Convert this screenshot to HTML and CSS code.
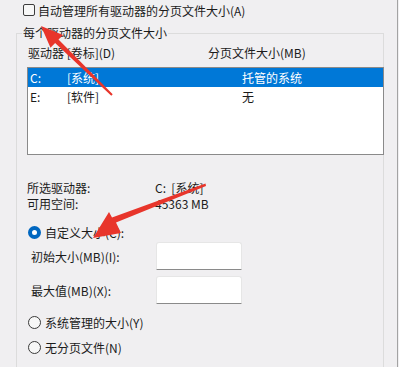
FILE: index.html
```html
<!DOCTYPE html>
<html lang="zh-CN">
<head>
  <meta charset="UTF-8">
  <title>虚拟内存</title>
  <link rel="stylesheet" href="styles.css">
</head>
<body>
  <div class="page">
    <div class="auto">
      <span class="check"></span>
      <span>自动管理所有驱动器的分页文件大小(A)</span>
    </div>

    <div class="group">
      <div class="group-title">每个驱动器的分页文件大小</div>

      <div class="list-head">
        <span class="col-drive">驱动器 [卷标](D)</span>
        <span>分页文件大小(MB)</span>
      </div>

      <div class="list">
        <div class="row selected">
          <span>C:</span><span>[系统]</span><span>托管的系统</span>
        </div>
        <div class="row">
          <span>E:</span><span>[软件]</span><span>无</span>
        </div>
      </div>

      <div class="info first">
        <span class="info-label">所选驱动器:</span>
        <span>C:&nbsp;&nbsp;[系统]</span>
      </div>
      <div class="info">
        <span class="info-label">可用空间:</span>
        <span>45363 MB</span>
      </div>

      <div class="radio custom">
        <span class="dot on"></span>
        <span>自定义大小(C):</span>
      </div>

      <div class="field first">
        <span class="field-label">初始大小(MB)(I):</span>
        <span class="box"></span>
      </div>
      <div class="field">
        <span class="field-label">最大值(MB)(X):</span>
        <span class="box"></span>
      </div>

      <div class="radio managed">
        <span class="dot"></span>
        <span>系统管理的大小(Y)</span>
      </div>
      <div class="radio nofile">
        <span class="dot"></span>
        <span>无分页文件(N)</span>
      </div>
    </div>

    <!-- red annotation arrows drawn over the dialog -->
    <svg class="arrows" width="399" height="367" viewBox="0 0 399 367">
      <polygon fill="#e8352b" points="41,26 63,35 58.5,39.5 112.7,94.3 111.3,95.7 55.1,43.1 50.5,47.8" />
      <polygon fill="#e8352b" points="93,238 109,212 112,217.5 205.5,183.5 206,186 116,222.5 121,233" />
    </svg>
  </div>
</body>
</html>
```

FILE: styles.css
```css
body {
  margin: 0;
  background-color: #f0eff1;
}
.page {
  position: relative;
  width: 397px;
  height: 367px;
  overflow: hidden;
  border-right: 1px solid #a3a3a3;
  background-color: #f0eff1;
  font-family: "Noto Sans CJK SC", "Noto Sans", sans-serif;
  font-size: 12px;
  color: #1b1b1b;
}
.auto {
  display: flex;
  align-items: center;
  height: 14px;
  padding: 3px 0 0 23px;
}
.check {
  width: 10px;
  height: 10px;
  border: 1px solid #3c3c3c;
  border-radius: 2px;
  margin-right: 3px;
  background-color: #f7f7f7;
}
.group {
  width: 368px;
  height: 340px;
  box-sizing: border-box;
  margin: 16px 0 0 16px;
  border: 1px solid #dcdcdc;
  border-bottom: none;
}
.group-title {
  width: max-content;
  height: 14px;
  line-height: 14px;
  margin: -8px 0 0 5px;
  padding: 0 1px;
  background-color: #f0eff1;
}
.list-head {
  display: flex;
  height: 14px;
  line-height: 14px;
  margin: 6px 0 7px 11px;
}
.col-drive {
  width: 180px;
}
.list {
  width: 357px;
  height: 88px;
  box-sizing: border-box;
  margin-left: 10px;
  border: 1px solid #8a8a8a;
  background-color: #fff;
}
.row {
  display: grid;
  grid-template-columns: 37px 175px 1fr;
  height: 19px;
  line-height: 19px;
  padding-left: 2px;
}
.row.selected {
  background-color: #0078d7;
  color: #fff;
}
.info {
  display: flex;
  height: 16px;
  line-height: 16px;
  margin-left: 10px;
}
.info.first {
  margin-top: 25px;
}
.info-label {
  width: 128px;
}
.radio {
  display: flex;
  align-items: center;
  height: 16px;
  margin-left: 11px;
}
.radio.custom {
  margin-top: 12px;
}
.radio.managed {
  margin-top: 10px;
}
.radio.nofile {
  margin-top: 9px;
}
.dot {
  width: 11px;
  height: 11px;
  border: 1px solid #3a3a3a;
  border-radius: 50%;
  margin-right: 4px;
  background-color: #f7f7f7;
}
.dot.on {
  width: 5px;
  height: 5px;
  border: 4px solid #0067c0;
  background-color: #fff;
}
.field {
  display: flex;
  align-items: center;
  height: 28px;
  margin-top: 6px;
  padding-left: 14px;
}
.field.first {
  margin-top: 2px;
}
.field-label {
  width: 125px;
}
.box {
  width: 86px;
  height: 28px;
  box-sizing: border-box;
  background-color: #fff;
  border: 1px solid #e6e6e6;
  border-bottom: 1px solid #8a8a8a;
  border-radius: 3px 3px 0 0;
}
.arrows {
  position: absolute;
  left: 0;
  top: 0;
}
```
